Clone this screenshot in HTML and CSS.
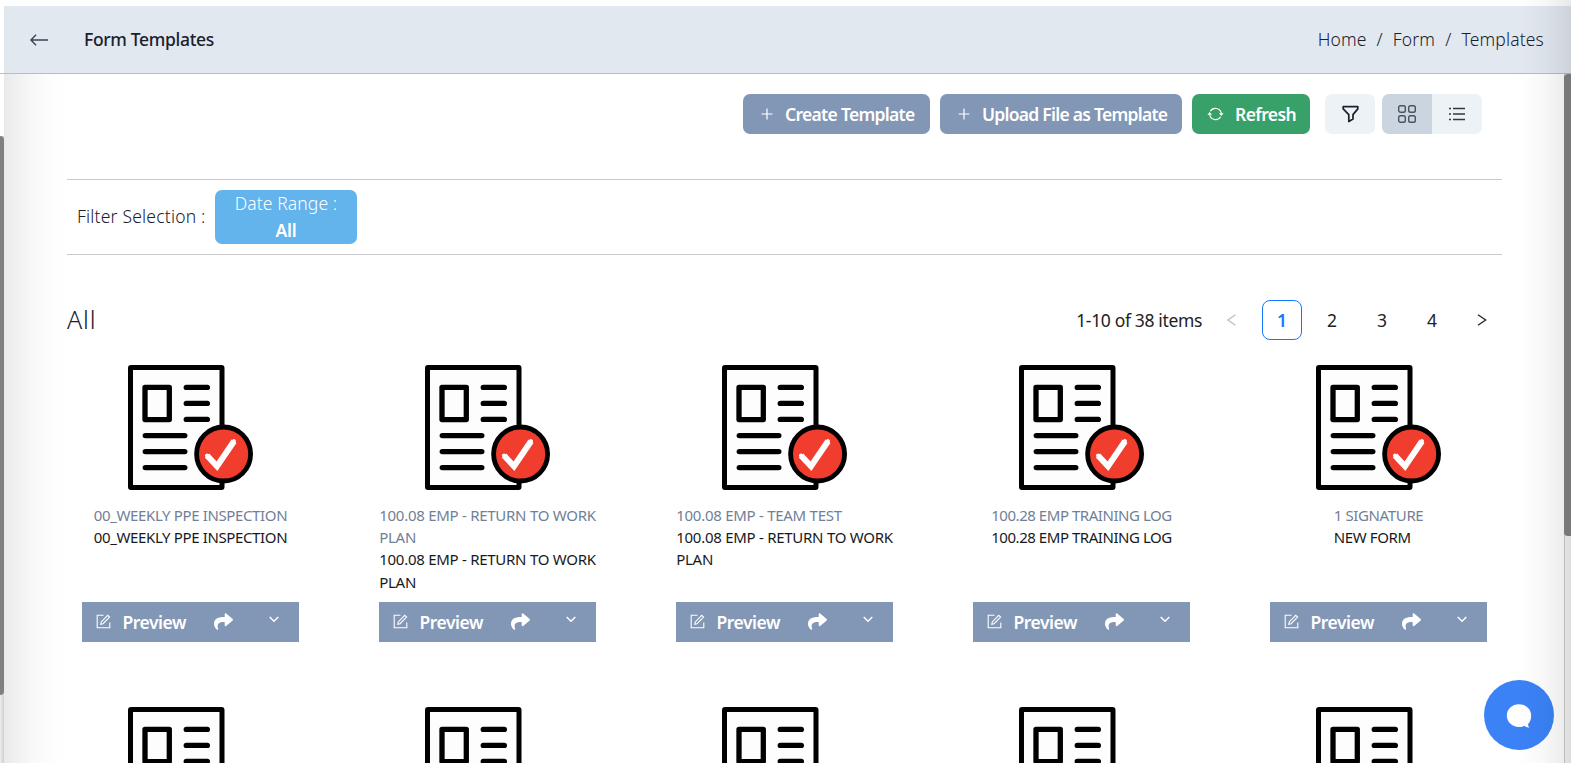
FILE: index.html
```html
<!DOCTYPE html>
<html lang="en">
<head>
<meta charset="utf-8">
<title>Form Templates</title>
<link rel="stylesheet" href="styles.css">
</head>
<body>
<svg class="defs" aria-hidden="true">
  <symbol id="doc" viewBox="0 0 125 125">
    <rect x="2.5" y="2.5" width="91.5" height="120" rx="0.5" fill="#fdfdfd" stroke="#000" stroke-width="5" stroke-linejoin="round"/>
    <rect x="17" y="22.300" width="24.300" height="32.300" fill="none" stroke="#000" stroke-width="5.300" stroke-linejoin="round"/>
    <path d="M58.3 22.4h21M58.3 38.4h21M58.3 54.4h21M17.3 70.6h39.500M17.300 86.600h39.500M17.300 102.600h39.500" stroke="#000" stroke-width="5.400" stroke-linecap="round"/>
    <circle cx="95.600" cy="89" r="27" fill="#f03d2d" stroke="#000" stroke-width="4.800"/>
    <path d="M79 90.500l10 10.700L106 76.200" fill="none" stroke="#fff" stroke-width="6" stroke-linejoin="miter"/>
    <path d="M79 90.500l10 10.700L106 76.200" fill="none" stroke="#fff" stroke-width="4" stroke-linecap="round"/>
  </symbol>
  <symbol id="plus" viewBox="0 0 12 12"><path d="M6 .5v11M.5 6h11" stroke="currentColor" stroke-width="1.200"/></symbol>
  <symbol id="edit" viewBox="0 0 15 15"><path d="M7.500 1.200H1.200v12.600h12.600V8.500M4.800 10.200l.5-2.300L11.700 1.300l1.900 1.800L7.100 9.700z" fill="none" stroke="currentColor" stroke-width="1.100"/></symbol>
  <symbol id="share" viewBox="0 0 512 512"><path fill="currentColor" d="M503.700 189.800 327.700 37.900C312.300 24.500 288 35.300 288 56v80.100C127.400 137.900 0 170.100 0 322.300c0 61.400 39.600 122.300 83.300 154.100 13.700 9.900 33.100-2.500 28.100-18.600C66.100 312.800 132.900 274.300 288 272.100V360c0 20.700 24.300 31.500 39.700 18.200l176-152c11.100-9.600 11.100-26.800 0-36.400z"/></symbol>
  <symbol id="down" viewBox="0 0 10 7"><path d="M.7 1l4.300 4.300L9.300 1" fill="none" stroke="currentColor" stroke-width="1.500"/></symbol>
</svg>

<div class="window">
  <header class="header">
    <svg class="back" width="18" height="12" viewBox="0 0 18 12"><path d="M6 .7L1 6l5 5.300M1 6h17" fill="none" stroke="#3a4352" stroke-width="1.400"/></svg>
    <h1 class="title">Form Templates</h1>
    <nav class="crumbs"><span>Home</span><i>/</i><span>Form</span><i>/</i><span>Templates</span></nav>
  </header>

  <main class="main">
    <div class="toolbar">
      <button class="btn create"><svg width="12" height="12"><use href="#plus"/></svg><span>Create Template</span></button>
      <button class="btn upload"><svg width="12" height="12"><use href="#plus"/></svg><span>Upload File as Template</span></button>
      <button class="btn refresh"><svg width="17" height="14" viewBox="0 0 17 14" fill="none" stroke="#fff" stroke-width="1.200"><path d="M3.300 4.200A6 6 0 0 1 14.300 6.500M13.700 9.800A6 6 0 0 1 2.700 7.500"/><path d="M12 6.200h4.600l-2.300 2.700zM.4 7.800H5L2.700 5.100z" fill="#fff" stroke="none"/></svg><span>Refresh</span></button>
      <button class="tool filter"><svg width="18" height="18" viewBox="0 0 18 18" fill="none" stroke="#1a202c" stroke-width="1.700" stroke-linejoin="round"><path d="M2.200 1.700h14.600v2.200L12 9.600v4.500L7.800 16.500V9.600L2.200 3.900z"/></svg></button>
      <div class="toggle">
        <button class="tool active"><svg width="18" height="18" viewBox="0 0 18 18" fill="none" stroke="#4a5361" stroke-width="1.400"><rect x=".7" y=".7" width="6.600" height="6.600" rx="1.800"/><rect x="10.700" y=".7" width="6.600" height="6.600" rx="1.800"/><rect x=".7" y="10.700" width="6.600" height="6.600" rx="1.800"/><rect x="10.700" y="10.700" width="6.600" height="6.600" rx="1.800"/></svg></button>
        <button class="tool"><svg width="16" height="14" viewBox="0 0 16 14" stroke="#303846" stroke-width="1.500"><path d="M4 1.500h12M4 7h12M4 12.500h12M0 1.500h2M0 7h2M0 12.500h2"/></svg></button>
      </div>
    </div>

    <section class="selection">
      <span class="label">Filter Selection :</span>
      <div class="chip"><span class="chip-name">Date Range :</span><b>All</b></div>
    </section>

    <div class="listhead">
      <h2 class="group">All</h2>
      <div class="pager">
        <span class="total">1-10 of 38 items</span>
        <span class="page"><svg width="10" height="12" viewBox="0 0 10 12"><path d="M8.500 .8L.9 6l7.600 5.200" fill="none" stroke="#bfbfbf" stroke-width="1.300"/></svg></span>
        <span class="page current">1</span>
        <span class="page">2</span>
        <span class="page">3</span>
        <span class="page">4</span>
        <span class="page"><svg width="10" height="12" viewBox="0 0 10 12"><path d="M1 .8L8.700 6 1 11.200" fill="none" stroke="#222" stroke-width="1.300"/></svg></span>
      </div>
    </div>

    <div class="grid">
      <article class="card">
        <svg class="doc"><use href="#doc"/></svg>
        <div class="names snug"><p class="code">00_WEEKLY PPE INSPECTION</p><p>00_WEEKLY PPE INSPECTION</p></div>
        <div class="actions"><svg width="15" height="15"><use href="#edit"/></svg><b>Preview</b><svg class="share" width="21" height="19"><use href="#share"/></svg><svg class="down" width="10" height="7"><use href="#down"/></svg></div>
      </article>
      <article class="card">
        <svg class="doc"><use href="#doc"/></svg>
        <div class="names"><p class="code">100.08 EMP - RETURN TO WORK<br>PLAN</p><p>100.08 EMP - RETURN TO WORK<br>PLAN</p></div>
        <div class="actions"><svg width="15" height="15"><use href="#edit"/></svg><b>Preview</b><svg class="share" width="21" height="19"><use href="#share"/></svg><svg class="down" width="10" height="7"><use href="#down"/></svg></div>
      </article>
      <article class="card">
        <svg class="doc"><use href="#doc"/></svg>
        <div class="names"><p class="code">100.08 EMP - TEAM TEST</p><p>100.08 EMP - RETURN TO WORK<br>PLAN</p></div>
        <div class="actions"><svg width="15" height="15"><use href="#edit"/></svg><b>Preview</b><svg class="share" width="21" height="19"><use href="#share"/></svg><svg class="down" width="10" height="7"><use href="#down"/></svg></div>
      </article>
      <article class="card">
        <svg class="doc"><use href="#doc"/></svg>
        <div class="names tight"><p class="code">100.28 EMP TRAINING LOG</p><p>100.28 EMP TRAINING LOG</p></div>
        <div class="actions"><svg width="15" height="15"><use href="#edit"/></svg><b>Preview</b><svg class="share" width="21" height="19"><use href="#share"/></svg><svg class="down" width="10" height="7"><use href="#down"/></svg></div>
      </article>
      <article class="card">
        <svg class="doc"><use href="#doc"/></svg>
        <div class="names snug"><p class="code">1 SIGNATURE</p><p>NEW FORM</p></div>
        <div class="actions"><svg width="15" height="15"><use href="#edit"/></svg><b>Preview</b><svg class="share" width="21" height="19"><use href="#share"/></svg><svg class="down" width="10" height="7"><use href="#down"/></svg></div>
      </article>
      <article class="card"><svg class="doc"><use href="#doc"/></svg></article>
      <article class="card"><svg class="doc"><use href="#doc"/></svg></article>
      <article class="card"><svg class="doc"><use href="#doc"/></svg></article>
      <article class="card"><svg class="doc"><use href="#doc"/></svg></article>
      <article class="card"><svg class="doc"><use href="#doc"/></svg></article>
    </div>
  </main>

  <div class="side-track"></div>
  <div class="side-thumb"></div>
  <div class="shade-left"></div>
  <div class="main-track"></div>
  <div class="chat"><svg width="26" height="26" viewBox="0 0 26 26"><path d="M13 2.300C6 2.300 .8 7.200.8 13.500S6 25 13 25c2.300 0 4-.4 5.600-1.200 1.200 1.400 3 2 4.700 1.600-.9-.9-1.300-2.300-1.200-3.500 2.100-2 3.100-4.900 3.100-8.400C25.200 7.200 20 2.300 13 2.300z" fill="#fff"/></svg></div>
  <div class="shade-right"></div>
  <div class="main-thumb"></div>
</div>
</body>
</html>
```
FILE: styles.css
```css
* { box-sizing: border-box; }
body { margin: 0; background: #fff; color: #1a202c; font-family: "Noto Sans", "Open Sans", sans-serif; }
h1, h2, p { margin: 0; font-weight: 400; }
button { border: 0; margin: 0; padding: 0; font-family: inherit; color: inherit; }
svg { display: block; flex: none; }
.defs { position: absolute; width: 0; height: 0; }

.window { position: relative; width: 100%; height: 763px; overflow: hidden; padding-top: 6px; }

.header { display: flex; align-items: center; height: 67px; margin-left: 4px; padding: 0 27px 0 26px; background: #e2e8f0; }
.title { margin: -2px 0 0 36px; font-size: 17.500px; font-weight: 500; letter-spacing: -0.330px; white-space: nowrap; }
.crumbs { display: flex; margin: -2px 0 0 auto; font-size: 17.500px; font-weight: 300; letter-spacing: 0.160px; white-space: nowrap; }
.crumbs i { font-style: normal; margin: 0 10px; }

.main { border-top: 1px solid #b9bcc1; padding: 20px 69px 0 67px; }
.toolbar { display: flex; justify-content: flex-end; height: 40px; padding-right: 20px; }
.btn { display: flex; align-items: center; height: 40px; border-radius: 7px; background: #8296b5; color: #fff; font-size: 17.500px; font-weight: 600; white-space: nowrap; margin-right: 10px; }
.create { width: 187px; padding-left: 18px; gap: 12px; letter-spacing: -0.700px; }
.upload { width: 242px; padding-left: 18px; gap: 12px; letter-spacing: -0.740px; }
.refresh { width: 118px; padding-left: 15px; gap: 11px; letter-spacing: -0.600px; background: #38a169; margin-right: 15px; }
.btn span { margin-top: -1px; }
.tool { display: flex; align-items: center; justify-content: center; width: 50px; height: 40px; background: #edf2f7; }
.filter { border-radius: 7px; margin-right: 7px; }
.toggle { display: flex; border-radius: 7px; overflow: hidden; }
.active { background: #cbd5e0; }

.selection { display: flex; align-items: center; height: 76px; margin-top: 45px; padding-left: 10px; border-top: 1px solid #c8cacc; border-bottom: 1px solid #c8cacc; }
.label { width: 138px; margin-top: -2px; font-size: 17.500px; font-weight: 300; letter-spacing: 0.200px; white-space: nowrap; }
.chip { display: flex; flex-direction: column; align-items: center; width: 142px; height: 54px; border-radius: 7px; background: #63b3ed; color: #fff; font-size: 17.500px; line-height: 27px; }
.chip-name { font-weight: 300; letter-spacing: 0.100px; }
.chip b { font-weight: 600; letter-spacing: -0.200px; }

.listhead { display: flex; align-items: center; justify-content: space-between; height: 40px; margin-top: 45px; }
.group { margin-top: -3px; font-size: 25px; font-weight: 300; letter-spacing: 0.800px; }
.pager { display: flex; align-items: center; gap: 10px; font-size: 17.500px; color: #222; }
.total { white-space: nowrap; letter-spacing: -0.350px; }
.page { display: flex; align-items: center; justify-content: center; width: 40px; height: 40px; }
.current { border: 1px solid #1677ff; border-radius: 8px; color: #1677ff; font-weight: 600; }

.grid { display: grid; grid-template-columns: repeat(5, 217px); column-gap: 80px; row-gap: 65px; padding: 25px 15px 0; }
.card { display: flex; flex-direction: column; align-items: center; height: 277px; }
.doc { width: 125px; height: 125px; }
.names { margin-top: 13.600px; height: 98.400px; font-size: 15px; line-height: 22.400px; letter-spacing: -0.270px; color: #17191d; white-space: nowrap; }
.snug { letter-spacing: -0.360px; }
.tight { letter-spacing: -0.450px; }
.code { color: #718096; }
.actions { display: flex; align-items: center; width: 217px; height: 40px; padding-left: 14px; background: #8296b5; color: #fff; font-size: 17.500px; }
.actions b { width: 80px; margin: 1px 0 0 11.500px; font-weight: 600; letter-spacing: -0.480px; }
.share { margin-left: 10.500px; }
.down { margin: -4px 0 0 35px; }

.side-track { position: absolute; left: 0; top: 136px; width: 4px; height: 627px; background: linear-gradient(90deg, #eee, #cfcfcf); }
.side-thumb { position: absolute; left: 0; top: 136px; width: 4px; height: 559px; background: #807f7d; border-radius: 0 4px 4px 0; }
.shade-left { position: absolute; left: 4px; top: 74px; width: 63px; height: 689px; background: linear-gradient(90deg, rgba(0,0,0,.085), rgba(0,0,0,.03) 40%, rgba(0,0,0,.006) 75%, transparent); }
.main-track { position: absolute; right: 0; top: 74px; width: 7px; height: 689px; background: #f4f4f4; border-left: 1px solid #ccc; }
.main-thumb { position: absolute; right: 0; top: 74px; width: 7px; height: 462px; background: #787878; border-radius: 4px 0 0 4px; }
.shade-right { position: absolute; right: 0; top: 0; width: 57px; height: 763px; background: linear-gradient(270deg, rgba(0,0,0,.09), rgba(0,0,0,.03) 45%, rgba(0,0,0,.006) 78%, transparent); }
.chat { position: absolute; left: 1484px; top: 680px; display: flex; align-items: center; justify-content: center; width: 70px; height: 70px; border-radius: 50%; background: #3b82f6; }
```
